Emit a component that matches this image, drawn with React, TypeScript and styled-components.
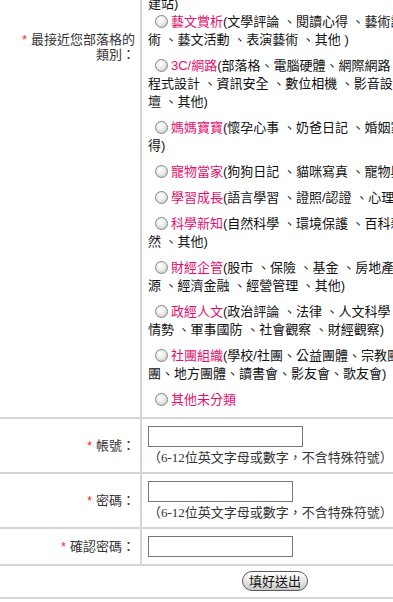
import React from "react"
import styled, { createGlobalStyle } from "styled-components"

const GlobalStyle = createGlobalStyle`
  html, body {
    margin: 0;
    padding: 0;
    overflow: hidden;
    background: #fff;
  }
  body {
    font-family: "Liberation Sans", "Noto Sans CJK TC", sans-serif;
    font-size: 13px;
    color: #222;
  }
`

// Form grid: label column + field column
const FormGrid = styled.form`
  display: grid;
  grid-template-columns: 142px 1fr;
  width: 550px;
  margin-top: -14px;
`

const LabelCell = styled.div<{ $top?: boolean; $pad?: number }>`
  box-sizing: border-box;
  display: flex;
  justify-content: flex-end;
  align-items: ${({ $top }) => ($top ? "flex-start" : "center")};
  padding: ${({ $pad }) => $pad ?? 0}px 5px 0 0;
  border-right: 2px solid #d4d4d4;
  border-bottom: 2px solid #d4d4d4;
  color: #333;
  line-height: 15px;
  text-align: right;
`

const FieldCell = styled.div<{ $pt: number; $pb: number }>`
  box-sizing: border-box;
  padding: ${({ $pt, $pb }) => `${$pt}px 0 ${$pb}px 6px`};
  border-bottom: 2px solid #d4d4d4;
  min-width: 0;
`

const ButtonCell = styled.div`
  grid-column: 1 / span 2;
  display: flex;
  justify-content: center;
  padding: 5px 0 6px;
  border-bottom: 2px solid #d4d4d4;
`

const Star = styled.span`
  color: #f03030;
  margin-right: 4px;
`

// Category list
const Line = styled.div`
  height: 18px;
  line-height: 18px;
  white-space: nowrap;
  color: #111;
`

const Item = styled.div<{ $first?: boolean }>`
  margin-top: ${({ $first }) => ($first ? 0 : 8)}px;
`

const Radio = styled.span`
  display: inline-block;
  box-sizing: border-box;
  width: 13px;
  height: 13px;
  margin: 0 3px 0 7px;
  vertical-align: -2px;
  border: 1px solid #858585;
  border-radius: 50%;
  background: radial-gradient(circle at 40% 35%, #ffffff 0%, #ececec 45%, #bdbdbd 100%);
`

const CatName = styled.span`
  color: #e5106c;
`

const TextInput = styled.input<{ $w: number }>`
  display: block;
  box-sizing: border-box;
  width: ${({ $w }) => $w}px;
  height: 21px;
  margin: 0;
  border: 1px solid #777;
  background: #fff;
`

const Hint = styled.div`
  margin-top: 2px;
  height: 18px;
  line-height: 18px;
  font-family: "Liberation Serif", "Noto Sans CJK TC", serif;
  font-size: 13px;
  color: #333;
  white-space: nowrap;
`

const SubmitButton = styled.button`
  box-sizing: border-box;
  width: 66px;
  height: 20px;
  padding: 0;
  border: 1px solid #5a5a5a;
  border-radius: 10px;
  background: linear-gradient(#ffffff, #e6e6e6 55%, #c8c8c8);
  font-family: "Noto Sans CJK TC", sans-serif;
  font-size: 13px;
  line-height: 18px;
  color: #111;
`

const categories: { name: string; lines: string[] }[] = [
  { name: "藝文賞析", lines: ["(文學評論 、閱讀心得 、藝術評論 、藝", "術 、藝文活動 、表演藝術 、其他 )"] },
  { name: "3C/網路", lines: ["(部落格、電腦硬體、網際網路 、軟體應用 、", "程式設計 、資訊安全 、數位相機 、影音設備 、論", "壇 、其他)"] },
  { name: "媽媽寶寶", lines: ["(懷孕心事 、奶爸日記 、婚姻家庭 、育兒心", "得)"] },
  { name: "寵物當家", lines: ["(狗狗日記 、貓咪寫真 、寵物與我 、其他)"] },
  { name: "學習成長", lines: ["(語言學習 、證照/認證 、心理勵志 、其他)"] },
  { name: "科學新知", lines: ["(自然科學 、環境保護 、百科新知 、天文自", "然 、其他)"] },
  { name: "財經企管", lines: ["(股市 、保險 、基金 、房地產 、人力資", "源 、經濟金融 、經營管理 、其他)"] },
  { name: "政經人文", lines: ["(政治評論 、法律 、人文科學 、國際", "情勢 、軍事國防 、社會觀察 、財經觀察)"] },
  { name: "社團組織", lines: ["(學校/社團、公益團體、宗教團體、同鄉社", "團、地方團體、讀書會、影友會、歌友會)"] },
  { name: "其他未分類", lines: [""] },
]

export default function App() {
  return (
    <>
      <GlobalStyle />
      <FormGrid onSubmit={(e) => e.preventDefault()}>
        <LabelCell $top $pad={46}>
          <span>
            <Star>*</Star>最接近您部落格的
            <br />
            類別：
          </span>
        </LabelCell>
        <FieldCell $pt={9} $pb={8}>
          <Line>建站)</Line>
          {categories.map((c, i) => (
            <Item key={c.name} $first={i === 0}>
              {c.lines.map((l, j) => (
                <Line key={j}>
                  {j === 0 && (
                    <>
                      <Radio />
                      <CatName>{c.name}</CatName>
                    </>
                  )}
                  {l}
                </Line>
              ))}
            </Item>
          ))}
        </FieldCell>

        <LabelCell>
          <span>
            <Star>*</Star>帳號：
          </span>
        </LabelCell>
        <FieldCell $pt={7} $pb={5}>
          <TextInput $w={155} type="text" />
          <Hint>（6-12位英文字母或數字，不含特殊符號）</Hint>
        </FieldCell>

        <LabelCell>
          <span>
            <Star>*</Star>密碼：
          </span>
        </LabelCell>
        <FieldCell $pt={7} $pb={5}>
          <TextInput $w={145} type="password" />
          <Hint>（6-12位英文字母或數字，不含特殊符號）</Hint>
        </FieldCell>

        <LabelCell>
          <span>
            <Star>*</Star>確認密碼：
          </span>
        </LabelCell>
        <FieldCell $pt={7} $pb={7}>
          <TextInput $w={145} type="password" />
        </FieldCell>

        <ButtonCell>
          <SubmitButton type="submit">填好送出</SubmitButton>
        </ButtonCell>
      </FormGrid>
    </>
  )
}
